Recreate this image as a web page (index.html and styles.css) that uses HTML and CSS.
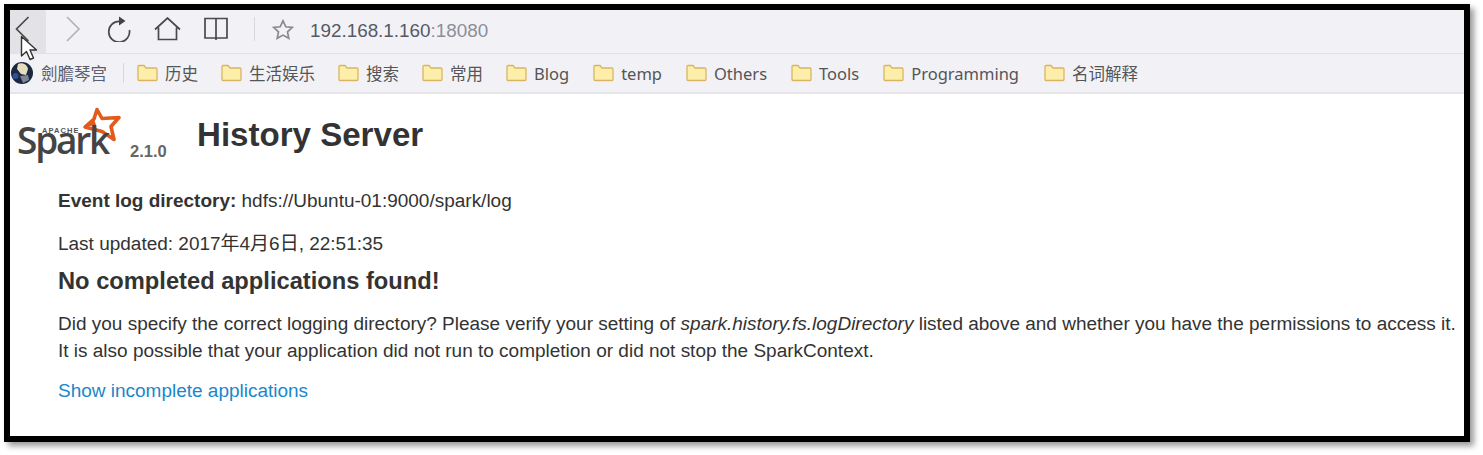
FILE: index.html
```html
<!DOCTYPE html>
<html lang="zh">
<head>
<meta charset="utf-8">
<title>History Server</title>
<link rel="stylesheet" href="styles.css">
</head>
<body>
<div class="frame">
  <div class="toolbar">
    <div class="nav-btn back"><svg width="18" height="30" viewBox="0 0 18 30"><path d="M14.500 3 2.500 15l12 12" class="ic-dark"/></svg></div>
    <div class="nav-btn fwd"><svg width="18" height="30" viewBox="0 0 18 30"><path d="M3 3l12 12L3 27" class="ic-light"/></svg></div>
    <svg class="ic reload" width="24" height="26" viewBox="0 0 24 26"><path d="M12.500 5.400A10.400 10.400 0 1 0 22.400 14" class="ic-dark"/><path d="M12 .5 18.500 5 12 9.500z" fill="#444"/></svg>
    <svg class="ic home" width="27" height="24" viewBox="0 0 27 24"><path d="M1 12.500 13.500 1 26 12.500M4.500 10.500V22.500h18V10.500" class="ic-dark"/></svg>
    <svg class="ic book" width="24" height="24" viewBox="0 0 24 24"><path d="M1 1.500h22v19.500H1zM12 1.500V23" class="ic-dark"/></svg>
    <div class="sep tall"></div>
    <svg class="ic star" width="22" height="22" viewBox="0 0 22 22"><path d="M11 1.800l2.800 6 6.500.7-4.800 4.400 1.300 6.400-5.800-3.200-5.800 3.200 1.300-6.400L1.700 8.500l6.500-.7z" class="ic-mid"/></svg>
    <div class="url">192.168.1.160<span class="port">:18080</span></div>
  </div>
  <div class="bookmarks">
    <svg class="avatar" width="22" height="22" viewBox="0 0 22 22"><circle cx="11" cy="11" r="11" fill="#1d2840"/><path d="M7 2c4-2 9 0 10 5l-2 6-5-1-4-5z" fill="#e6dcc0"/><path d="M9 14l8-1 1 5-6 3z" fill="#7d8598"/><circle cx="4.500" cy="14" r="3" fill="#2f4f9a"/></svg>
    <span class="user">劍膽琴宫</span>
    <div class="sep"></div>
    <div class="bm first"><svg class="folder" width="21" height="18" viewBox="0 0 21 18"><path d="M1 15.500V2.500a1 1 0 0 1 1-1h5l2 2.500h10a1 1 0 0 1 1 1v10.500a1 1 0 0 1-1 1H2a1 1 0 0 1-1-1z" class="fd"/></svg>历史</div>
    <div class="bm"><svg class="folder" width="21" height="18" viewBox="0 0 21 18"><path d="M1 15.500V2.500a1 1 0 0 1 1-1h5l2 2.500h10a1 1 0 0 1 1 1v10.500a1 1 0 0 1-1 1H2a1 1 0 0 1-1-1z" class="fd"/></svg>生活娱乐</div>
    <div class="bm"><svg class="folder" width="21" height="18" viewBox="0 0 21 18"><path d="M1 15.500V2.500a1 1 0 0 1 1-1h5l2 2.500h10a1 1 0 0 1 1 1v10.500a1 1 0 0 1-1 1H2a1 1 0 0 1-1-1z" class="fd"/></svg>搜索</div>
    <div class="bm"><svg class="folder" width="21" height="18" viewBox="0 0 21 18"><path d="M1 15.500V2.500a1 1 0 0 1 1-1h5l2 2.500h10a1 1 0 0 1 1 1v10.500a1 1 0 0 1-1 1H2a1 1 0 0 1-1-1z" class="fd"/></svg>常用</div>
    <div class="bm"><svg class="folder" width="21" height="18" viewBox="0 0 21 18"><path d="M1 15.500V2.500a1 1 0 0 1 1-1h5l2 2.500h10a1 1 0 0 1 1 1v10.500a1 1 0 0 1-1 1H2a1 1 0 0 1-1-1z" class="fd"/></svg>Blog</div>
    <div class="bm wide"><svg class="folder" width="21" height="18" viewBox="0 0 21 18"><path d="M1 15.500V2.500a1 1 0 0 1 1-1h5l2 2.500h10a1 1 0 0 1 1 1v10.500a1 1 0 0 1-1 1H2a1 1 0 0 1-1-1z" class="fd"/></svg>temp</div>
    <div class="bm wide"><svg class="folder" width="21" height="18" viewBox="0 0 21 18"><path d="M1 15.500V2.500a1 1 0 0 1 1-1h5l2 2.500h10a1 1 0 0 1 1 1v10.500a1 1 0 0 1-1 1H2a1 1 0 0 1-1-1z" class="fd"/></svg>Others</div>
    <div class="bm wide"><svg class="folder" width="21" height="18" viewBox="0 0 21 18"><path d="M1 15.500V2.500a1 1 0 0 1 1-1h5l2 2.500h10a1 1 0 0 1 1 1v10.500a1 1 0 0 1-1 1H2a1 1 0 0 1-1-1z" class="fd"/></svg>Tools</div>
    <div class="bm wide"><svg class="folder" width="21" height="18" viewBox="0 0 21 18"><path d="M1 15.500V2.500a1 1 0 0 1 1-1h5l2 2.500h10a1 1 0 0 1 1 1v10.500a1 1 0 0 1-1 1H2a1 1 0 0 1-1-1z" class="fd"/></svg>Programming</div>
    <div class="bm wider"><svg class="folder" width="21" height="18" viewBox="0 0 21 18"><path d="M1 15.500V2.500a1 1 0 0 1 1-1h5l2 2.500h10a1 1 0 0 1 1 1v10.500a1 1 0 0 1-1 1H2a1 1 0 0 1-1-1z" class="fd"/></svg>名词解释</div>
  </div>
  <div class="page">
    <div class="header">
      <div class="logo">
        <svg class="logo-star" width="40" height="36" viewBox="0 0 40 36"><path d="M15 2.500l5 9 17-1-8 9 3 13-12-8-17-4.500 9-8z" fill="none" stroke="#e25a1c" stroke-width="3.600" stroke-linejoin="round"/><path d="M3 20 12 12 14 18z" fill="#e25a1c"/></svg>
        <span class="logo-apache">APACHE</span>
        <span class="logo-spark">Spark</span>
      </div>
      <span class="version">2.1.0</span>
      <h1>History Server</h1>
    </div>
    <div class="content">
      <p class="event"><strong>Event log directory:</strong> hdfs://Ubuntu-01:9000/spark/log</p>
      <p class="updated">Last updated: 2017年4月6日, 22:51:35</p>
      <h4>No completed applications found!</h4>
      <p class="hint">Did you specify the correct logging directory? Please verify your setting of <em>spark.history.fs.logDirectory</em> listed above and whether you have the permissions to access it.<br>It is also possible that your application did not run to completion or did not stop the SparkContext.</p>
      <a class="link" href="#">Show incomplete applications</a>
    </div>
  </div>
  <svg class="cursor" width="20" height="28" viewBox="0 0 20 28"><path d="M1.500 1.500V21l5-4.500 3.500 8 3.500-1.500-3.500-8h6.500z" fill="#fff" stroke="#333" stroke-width="1.400" stroke-linejoin="round"/></svg>
</div>
</body>
</html>
```
FILE: styles.css
```css
* { box-sizing: border-box; }
html, body { margin: 0; padding: 0; background: #fff; }
body { width: 1483px; height: 455px; overflow: hidden; padding: 4px 0 0 4px; }
.frame {
  position: relative;
  width: 1466px;
  height: 438px;
  border: 6px solid #000;
  background: #fff;
  box-shadow: 4px 4px 6px rgba(0,0,0,.4);
  font-family: "Liberation Sans", "Noto Sans CJK SC", sans-serif;
  color: #333;
}
.toolbar {
  display: flex;
  align-items: center;
  height: 44px;
  background: #f2f2f6;
  border-bottom: 1px solid #e2e2e6;
}
.nav-btn { width: 36px; height: 43px; display: flex; align-items: center; padding-bottom: 6px; }
.nav-btn.back { background: #e3e3e7; padding-left: 4px; }
.nav-btn.fwd { margin-left: 7px; padding-left: 11px; }
.ic-dark, .ic-light, .ic-mid { fill: none; stroke-width: 1.700; }
.ic-dark { stroke: #4a4a4a; }
.ic-light { stroke: #b4b4b4; }
.ic-mid { stroke: #8a8a8a; }
.ic { flex: none; margin-bottom: 6px; }
.reload { margin-left: 18px; }
.home { margin-left: 23px; }
.book { margin-left: 23px; }
.sep { width: 1px; height: 20px; background: #d8d8dc; flex: none; }
.sep.tall { height: 24px; margin-left: 26px; margin-bottom: 6px; }
.star { margin-left: 17px; margin-bottom: 3px; }
.url { margin-left: 16px; margin-bottom: 2px; font-size: 18.850px; color: #555a66; }
.port { color: #8b8f99; }
.bookmarks {
  display: flex;
  align-items: center;
  gap: 23px;
  height: 40px;
  background: #f2f2f6;
  border-bottom: 2px solid #e6e6ea;
  font-family: "Noto Sans", "Noto Sans CJK SC", sans-serif;
  font-size: 16.500px;
  color: #555;
  padding-left: 1px;
}
.avatar { flex: none; margin-right: -15px; }
.user { color: #5a6070; margin-right: -7px; }
.bookmarks .sep { margin-right: -8px; }
.bm { display: flex; align-items: center; gap: 7px; white-space: nowrap; }
.bm.first { margin-left: -2px; }
.bm.wide { margin-left: 1px; }
.bm.wider { margin-left: 2px; }
.folder { flex: none; }
.fd { fill: #fdeeaa; stroke: #d9b562; stroke-width: 1.300; }
.page { display: flex; flex-direction: column; }
.header { display: flex; align-items: flex-start; height: 86px; }
.logo { position: relative; width: 114px; height: 60px; flex: none; margin-left: 6px; }
.logo-star { position: absolute; left: 66px; top: 13px; }
.logo-apache { position: absolute; left: 26px; top: 33px; font-size: 7.500px; line-height: 7px; font-weight: bold; letter-spacing: 1.100px; color: #555; }
.logo-spark { position: absolute; left: 1px; top: 33px; height: 26px; font-family: "Open Sans", sans-serif; font-weight: 600; font-size: 37px; line-height: 26px; letter-spacing: -2.200px; color: #444; }
.version { margin-top: 48px; font-size: 16.500px; font-weight: bold; color: #666; flex: none; width: 67px; }
h1 { margin: 22px 0 0 0; font-size: 33.100px; font-weight: bold; line-height: 38px; color: #333; white-space: nowrap; }
.content { padding-left: 48px; font-size: 18.990px; line-height: 27px; }
.content p { margin: 0; }
.event { margin-top: 7px !important; }
.updated { margin-top: 16px !important; }
h4 { margin: 10px 0 0; font-size: 23.700px; line-height: 28px; font-weight: bold; color: #333; }
.hint { margin-top: 15px !important; }
.link { display: block; margin-top: 13px; color: #1a87c9; text-decoration: none; }
.cursor { position: absolute; left: 10px; top: 25px; }
```
